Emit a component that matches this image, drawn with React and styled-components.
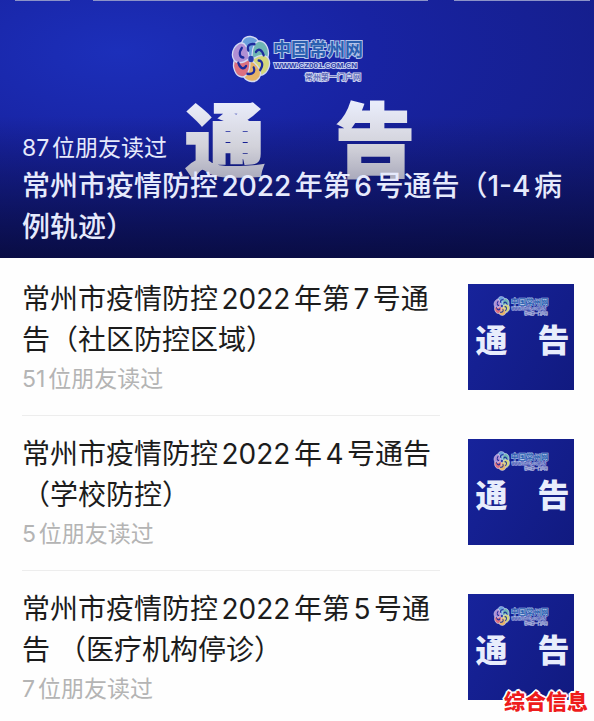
import React from "react";
import styled, { createGlobalStyle } from "styled-components";

const articles = [
    { id: 7, title: "常州市疫情防控2022年第7号通告（社区防控区域）", readers: 51 },
    { id: 4, title: "常州市疫情防控2022年4号通告（学校防控）", readers: 5 },
    { id: 5, title: "常州市疫情防控2022年第5号通告 （医疗机构停诊）", readers: 7 },
];

const petals = [
    { angle: 0, color: "#6a9fdc" },
    { angle: 60, color: "#6fb6b4" },
    { angle: 120, color: "#d3d77c" },
    { angle: 180, color: "#e6b468" },
    { angle: 240, color: "#dc7080" },
    { angle: 300, color: "#b08fd4" },
];

const BrandLogo = () => (
    <Brand viewBox="0 0 132 48" role="img" aria-label="中国常州网">
        <g transform="translate(20 24) scale(0.9 1.06)">
            {petals.map((petal) => (
                <g key={petal.angle} transform={`rotate(${petal.angle})`}>
                    <path
                        d="M-1-2C-9-6-13-13-9-18C-5-23 4-22 8-17C10-13 7-8 1-3Z"
                        fill={petal.color}
                        stroke="#d4daf4"
                        strokeWidth="1.4"
                    />
                </g>
            ))}
            {petals.map((petal) => (
                <path
                    key={petal.angle}
                    transform={`rotate(${petal.angle})`}
                    d="M-3-8C-5-12-2-15 4-14"
                    fill="none"
                    stroke="#1c2a9c"
                    strokeWidth="2.4"
                    strokeLinecap="round"
                />
            ))}
            <circle r="3" fill="#2c3fae" />
        </g>
        <BrandName x="42" y="21">中国常州网</BrandName>
        <BrandUrl x="43" y="33">WWW.CZ001.COM.CN</BrandUrl>
        <BrandSlogan x="130" y="45">常州第一门户网</BrandSlogan>
    </Brand>
);

const App = () => {
    return (
        <Page>
            <GlobalStyle />
            <Hero>
                <BrandLogo />
                <HeroNotice>
                    <span>通</span>
                    <span>告</span>
                </HeroNotice>
                <HeroCaption>
                    <HeroReaders>87位朋友读过</HeroReaders>
                    <HeroTitle>常州市疫情防控2022年第6号通告（1-4病例轨迹）</HeroTitle>
                </HeroCaption>
            </Hero>
            <List>
                {articles.map((article) => (
                    <Item key={article.id}>
                        <ItemText>
                            <Title>{article.title}</Title>
                            <Readers>{`${article.readers}位朋友读过`}</Readers>
                        </ItemText>
                        <Thumb>
                            <BrandLogo />
                            <ThumbNotice>
                                <span>通</span>
                                <span>告</span>
                            </ThumbNotice>
                        </Thumb>
                    </Item>
                ))}
            </List>
            <Watermark>综合信息</Watermark>
        </Page>
    );
};

const GlobalStyle = createGlobalStyle`
  body {
    margin: 0;
    background-color: #fefefe;
    font-family: Inter, "Noto Sans CJK SC", sans-serif;
    text-autospace: normal;
  }
`;

const Page = styled.main`
  position: relative;
  min-height: 100vh;
  overflow: hidden;
`;

const Brand = styled.svg`
  display: block;
  width: 132px;
  height: 48px;
`;

const BrandName = styled.text`
  font-family: "Noto Sans CJK SC", sans-serif;
  font-size: 18px;
  font-weight: 700;
  fill: #2a5fb0;
  stroke: #b4c4ea;
  stroke-width: 2px;
  paint-order: stroke;
`;

const BrandUrl = styled.text`
  font-family: "Liberation Sans", sans-serif;
  font-size: 8px;
  font-weight: 700;
  fill: #2a3da6;
  stroke: #c3cbef;
  stroke-width: 2px;
  paint-order: stroke;
`;

const BrandSlogan = styled.text`
  font-family: "Noto Sans CJK SC", sans-serif;
  font-size: 8px;
  text-anchor: end;
  fill: #3444a4;
  stroke: #c9cfee;
  stroke-width: 2px;
  paint-order: stroke;
`;

const Hero = styled.header`
  position: relative;
  display: flex;
  flex-direction: column;
  align-items: center;
  box-sizing: border-box;
  height: 258px;
  padding-top: 35px;
  background:
    linear-gradient(90deg, transparent 15px, #8c93c8 15px 70px, transparent 70px 93px, #8c93c8 93px 428px, transparent 428px 454px, #8c93c8 454px 590px, transparent 590px) top / 100% 1px no-repeat,
    linear-gradient(180deg, transparent 45%, rgba(6, 8, 50, 0.8) 100%),
    radial-gradient(ellipse at 20% 20%, #1c2fba 0%, #1823a2 38%, #131b7e 100%);
`;

const Notice = styled.div`
  display: flex;
  font-family: "Noto Sans CJK SC", sans-serif;
  font-weight: 900;
  line-height: 1;
`;

const HeroNotice = styled(Notice)`
  gap: 70px;
  margin-top: 12px;
  padding: 0 0 6px 6px;
  font-size: 80px;
  color: transparent;
  background: linear-gradient(180deg, #e9ecfa 10%, #d2d2da 60%, #a8a8ba 100%);
  background-clip: text;
  -webkit-text-stroke: 2px transparent;
`;

const HeroCaption = styled.div`
  position: absolute;
  right: 20px;
  bottom: 10px;
  left: 22px;
  color: #e6eafc;
`;

const HeroReaders = styled.div`
  font-size: 23px;
  line-height: 36px;
`;

const HeroTitle = styled.h1`
  margin: 0;
  font-size: 28px;
  font-weight: 500;
  line-height: 41px;
`;

const List = styled.section`
  padding: 3px 20px 0 22px;
`;

const Item = styled.article`
  display: flex;
  align-items: flex-start;
  gap: 28px;
`;

const ItemText = styled.div`
  flex: 1;
  padding: 18px 0;
  border-bottom: 1px solid #ededed;

  ${Item}:last-child & {
    border-bottom: 0;
  }
`;

const Title = styled.h2`
  margin: 0;
  font-size: 28px;
  font-weight: 400;
  line-height: 41px;
  color: #1c1c1c;
`;

const Readers = styled.div`
  font-size: 23px;
  line-height: 36px;
  color: #b4b4b4;
`;

const Thumb = styled.div`
  display: flex;
  flex-direction: column;
  align-items: center;
  flex-shrink: 0;
  box-sizing: border-box;
  width: 106px;
  height: 106px;
  margin-top: 23px;
  padding-top: 12px;
  background: linear-gradient(120deg, #17239b, #111a80);

  ${Brand} {
    width: 56px;
    height: 20px;
  }
`;

const ThumbNotice = styled(Notice)`
  gap: 30px;
  margin-top: 6px;
  padding-left: 3px;
  font-size: 32px;
  color: #e8edfc;
`;

const Watermark = styled.div`
  position: absolute;
  right: 6px;
  bottom: 8px;
  font-size: 21px;
  font-weight: 900;
  line-height: 30px;
  color: #ee1c1c;
  text-shadow: 1px 1px 0 #fff, -1px 1px 0 #fff, 1px -1px 0 #fff, -1px -1px 0 #fff, 0 2px 0 #fff, 0 -2px 0 #fff, 2px 0 0 #fff, -2px 0 0 #fff;
`;

export default App;
